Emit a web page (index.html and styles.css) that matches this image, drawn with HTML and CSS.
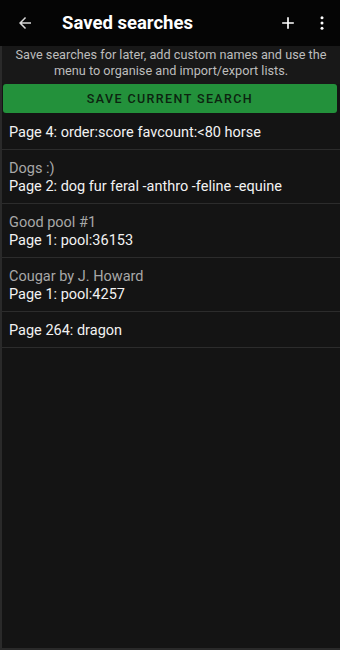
FILE: index.html
```html
<!DOCTYPE html>
<html lang="en">
<head>
  <meta charset="UTF-8">
  <meta name="viewport" content="width=device-width, initial-scale=1.0">
  <title>Saved searches</title>
  <link rel="stylesheet" href="styles.css">
</head>
<body>
  <div class="screen">
    <div class="toolbar">
      <button class="icon-button back">
        <svg width="18" height="18" viewBox="0 0 24 24"><path d="M20 11H7.83l5.59-5.59L12 4l-8 8 8 8 1.41-1.41L7.83 13H20v-2z" fill="#d8d8d8"/></svg>
      </button>
      <h1 class="title">Saved searches</h1>
      <button class="icon-button add">
        <svg width="20" height="20" viewBox="0 0 24 24"><path d="M19 13h-6v6h-2v-6H5v-2h6V5h2v6h6v2z" fill="#ffffff"/></svg>
      </button>
      <button class="icon-button more">
        <svg width="18" height="18" viewBox="0 0 24 24"><circle cx="12" cy="5" r="2" fill="#ffffff"/><circle cx="12" cy="12" r="2" fill="#ffffff"/><circle cx="12" cy="19" r="2" fill="#ffffff"/></svg>
      </button>
    </div>

    <div class="content">
      <p class="hint">Save searches for later, add custom names and use the menu to organise and import/export lists.</p>
      <button class="save-button">Save current search</button>

      <ul class="search-list">
        <li class="search-item">
          <div class="query">Page 4: order:score favcount:&lt;80 horse</div>
        </li>
        <li class="search-item">
          <div class="name">Dogs :)</div>
          <div class="query">Page 2: dog fur feral -anthro -feline -equine</div>
        </li>
        <li class="search-item">
          <div class="name">Good pool #1</div>
          <div class="query">Page 1: pool:36153</div>
        </li>
        <li class="search-item">
          <div class="name">Cougar by J. Howard</div>
          <div class="query">Page 1: pool:4257</div>
        </li>
        <li class="search-item">
          <div class="query">Page 264: dragon</div>
        </li>
      </ul>
    </div>
  </div>
</body>
</html>
```

FILE: styles.css
```css
:root {
  --bar: #050505;
  --bg: #141414;
  --divider: #2c2c2c;
  --green: #23913b;
  --text: #f2f2f2;
  --muted: #a8a8a8;
}

* {
  margin: 0;
  padding: 0;
  box-sizing: border-box;
}

html, body {
  height: 100%;
}

body {
  font-family: Roboto, "Noto Sans", sans-serif;
  background-color: var(--bg);
  color: var(--text);
}

.screen {
  height: 100%;
  display: flex;
  flex-direction: column;
}

.toolbar {
  height: 46px;
  background-color: var(--bar);
  display: flex;
  align-items: center;
  padding: 0 4px 0 12px;
}

.icon-button {
  background: none;
  border: none;
  display: flex;
  align-items: center;
  justify-content: center;
  cursor: pointer;
}

.back {
  width: 26px;
  height: 26px;
  margin-top: -1px;
}

.title {
  flex: 1;
  font-size: 18.5px;
  font-weight: 700;
  color: #ffffff;
  margin-left: 24px;
  margin-top: -1px;
}

.add {
  width: 28px;
  height: 28px;
  margin-right: 6px;
}

.more {
  width: 28px;
  height: 28px;
}

.content {
  flex: 1;
  border-left: 2px solid #2a2a2a;
  border-bottom: 2px solid #2a2a2a;
}

.hint {
  font-size: 12.7px;
  line-height: 16px;
  color: #bdbdbd;
  text-align: center;
  padding: 1px 4px 0;
  background-color: #181818;
  height: 38px;
}

.save-button {
  display: block;
  width: calc(100% - 4px);
  margin: 0 0 0 1px;
  height: 29px;
  background-color: var(--green);
  border: none;
  border-radius: 3px;
  font-family: Roboto, sans-serif;
  font-size: 12.5px;
  font-weight: 500;
  letter-spacing: 1.4px;
  text-transform: uppercase;
  color: #0c2410;
  cursor: pointer;
}

.search-list {
  list-style: none;
}

.search-item {
  padding: 10px 7px 7px;
  border-bottom: 1px solid var(--divider);
  font-size: 14.5px;
  line-height: 18px;
}

.search-item:first-child {
  padding-top: 11px;
}

.name {
  color: var(--muted);
}

.query {
  color: var(--text);
}
```
